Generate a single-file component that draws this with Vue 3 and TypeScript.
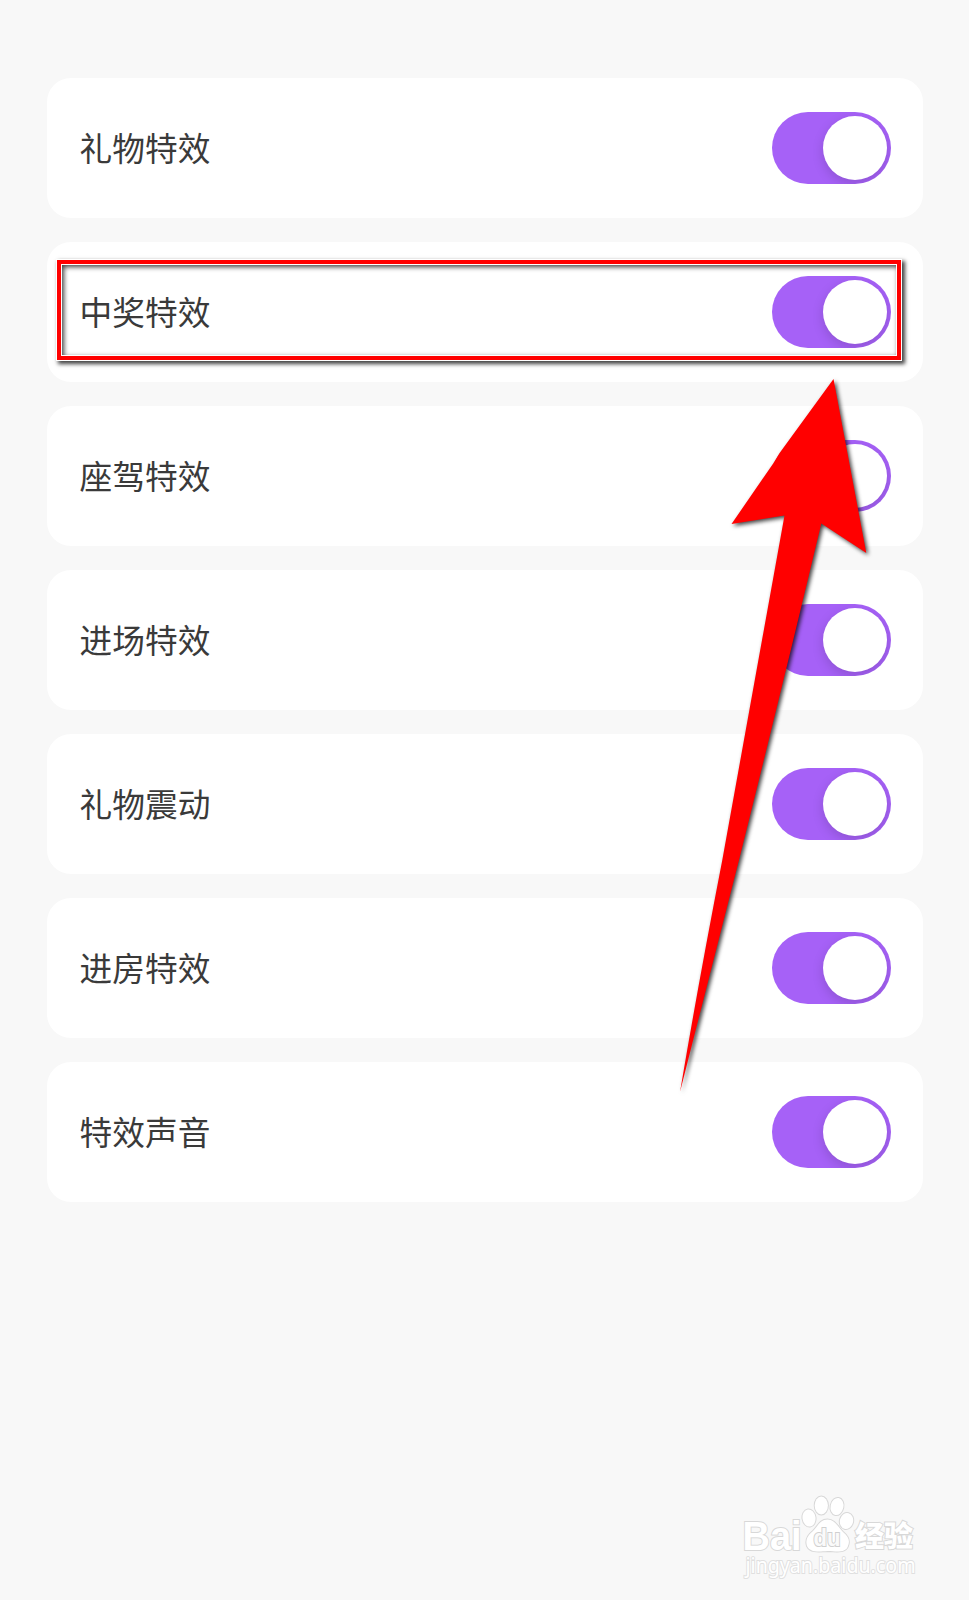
<script setup lang="ts">
import { ref } from 'vue'

interface Setting {
  label: string
  on: boolean
  highlighted?: boolean
}

const settings = ref<Setting[]>([
  { label: '礼物特效', on: true },
  { label: '中奖特效', on: true, highlighted: true },
  { label: '座驾特效', on: true },
  { label: '进场特效', on: true },
  { label: '礼物震动', on: true },
  { label: '进房特效', on: true },
  { label: '特效声音', on: true },
])
</script>

<template>
  <main class="page">
    <section class="list">
      <div v-for="item in settings" :key="item.label" class="card">
        <span class="label">{{ item.label }}</span>
        <button
          type="button"
          role="switch"
          class="switch"
          :class="{ off: !item.on }"
          :aria-checked="item.on"
          :aria-label="item.label"
          @click="item.on = !item.on"
        >
          <span class="knob"></span>
        </button>
        <div v-if="item.highlighted" class="frame"></div>
      </div>
    </section>

    <svg class="arrow" viewBox="0 0 969 1600" aria-hidden="true">
      <path d="M833.5 379 L866.3 553 L821.3 523.5 Q783 684 739 860 Q711 970 680 1092 Q698 985 722.3 860 L784.5 515.5 L731.5 524 L773.2 463.5 L779.6 453 Z" />
    </svg>

    <svg class="watermark" viewBox="730 1480 200 110" aria-hidden="true">
      <text class="latin" x="742.5" y="1550" textLength="59" lengthAdjust="spacingAndGlyphs">Bai</text>
      <g class="paw">
        <ellipse cx="809" cy="1518" rx="6.5" ry="8.6" transform="rotate(-8 809 1518)" />
        <ellipse cx="821.3" cy="1505.5" rx="6.6" ry="9" />
        <ellipse cx="837" cy="1506.5" rx="6.4" ry="8.6" transform="rotate(12 837 1506.5)" />
        <ellipse cx="846.5" cy="1521" rx="6.6" ry="8" transform="rotate(15 846.5 1521)" />
        <path d="M827.5 1519.5 C835 1519.5 838 1527 843 1532 C849 1537 850 1541 848 1546 C846 1552 840 1552 828 1551 C816 1552 810 1552 807 1546 C805 1540 808 1535 813 1531 C818 1526 820 1519.5 827.5 1519.5 Z" />
      </g>
      <text class="du" x="813.5" y="1546" textLength="27" lengthAdjust="spacingAndGlyphs">du</text>
      <text class="cjk" x="855" y="1547.3" textLength="58" lengthAdjust="spacingAndGlyphs">经验</text>
      <text class="url" x="745.5" y="1573" textLength="170" lengthAdjust="spacingAndGlyphs">jingyan.baidu.com</text>
    </svg>
  </main>
</template>

<style>
body {
  background: #f8f8f8;
}
</style>

<style scoped>
.page {
  position: relative;
  box-sizing: border-box;
  width: 969px;
  height: 1600px;
  padding: 77.6px 46px 0 46.7px;
  overflow: hidden;
  background: #f8f8f8;
  font-family: "Noto Sans CJK SC", sans-serif;
}

.list {
  display: flex;
  flex-direction: column;
  gap: 23.5px;
}

.card {
  position: relative;
  display: flex;
  align-items: center;
  justify-content: space-between;
  box-sizing: border-box;
  height: 140.5px;
  padding: 0 31.6px 0 32.9px;
  border-radius: 24px;
  background: #fff;
}

.label {
  margin-top: -2px;
  color: #3a3a3a;
  font-size: 32.7px;
  line-height: 48px;
}

.switch {
  display: flex;
  align-items: center;
  justify-content: flex-end;
  box-sizing: border-box;
  width: 119.4px;
  height: 72.6px;
  padding: 0 4.3px;
  overflow: hidden;
  border: 0;
  border-radius: 37px;
  background: #a661f7;
}

.switch.off {
  justify-content: flex-start;
  background: #ddd;
}

.knob {
  width: 64px;
  height: 64px;
  border-radius: 50%;
  background: #fff;
  box-shadow: 0 4px 12px rgba(0, 0, 0, 0.15);
}

.frame {
  position: absolute;
  top: 18.3px;
  left: 10.3px;
  box-sizing: border-box;
  width: 844px;
  height: 100px;
  border: 4px solid #f00;
  box-shadow:
    0 0 0 1px #fff,
    2px 2px 4px 1.5px rgba(0, 0, 0, 0.75),
    inset 0 0 0 1px #fff,
    inset 2px 2px 5px 1px rgba(0, 0, 0, 0.75);
  pointer-events: none;
}

.arrow {
  position: absolute;
  inset: 0;
  width: 969px;
  height: 1600px;
  pointer-events: none;
}

.arrow path {
  fill: #f00;
  filter: drop-shadow(2px 2px 2px rgba(0, 0, 0, 0.75));
}

.watermark {
  position: absolute;
  right: 39px;
  bottom: 10px;
  width: 200px;
  height: 110px;
}

.watermark text,
.paw {
  fill: #fff;
  stroke: #d8d8d8;
  stroke-width: 2px;
  paint-order: stroke;
}

.watermark .latin {
  font: 700 40px "Liberation Sans", sans-serif;
}

.watermark .du {
  fill: #fafafa;
  stroke: #d0d0d0;
  font: 700 24px "Liberation Sans", sans-serif;
}

.watermark .cjk {
  font: 900 29px "Noto Sans CJK SC", sans-serif;
}

.watermark .url {
  stroke: #e0e0e0;
  font: 400 21.5px "Noto Sans", sans-serif;
}
</style>
